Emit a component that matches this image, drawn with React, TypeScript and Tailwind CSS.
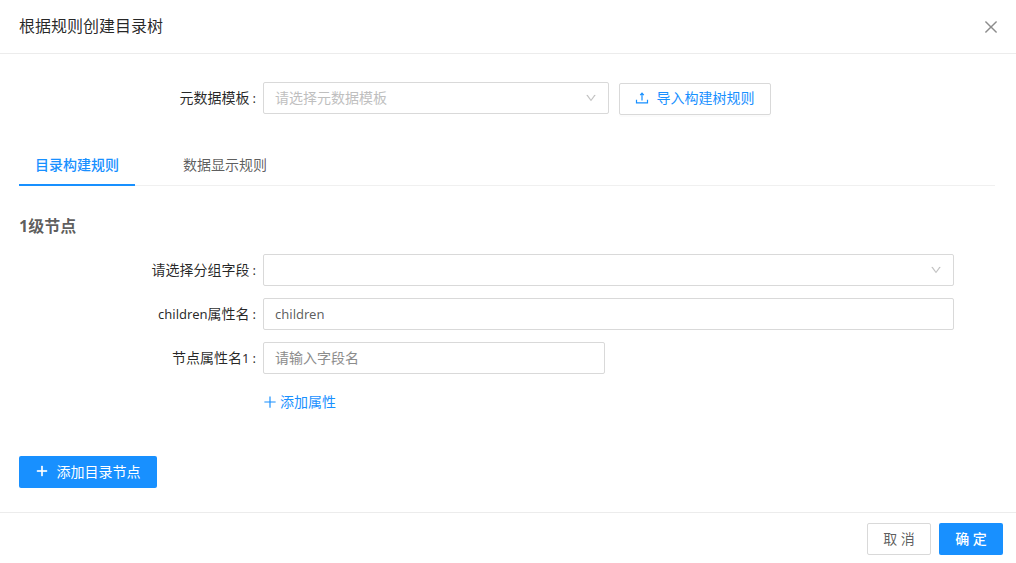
import type { ReactNode } from 'react'
import { AiOutlineClose, AiOutlineDown, AiOutlinePlus } from 'react-icons/ai'

const tabs = ['目录构建规则', '数据显示规则']

function UploadIcon() {
  return (
    <svg width="14" height="14" viewBox="0 0 14 14" fill="none" stroke="currentColor" strokeWidth="1.2">
      <path d="M1.5 8.8v3h11v-3" />
      <path d="M7 9.5V2.5M5.2 4.2L7 2.2l1.8 2" />
    </svg>
  )
}

function Label({ children }: { children: ReactNode }) {
  return (
    <label className="w-[244px] shrink-0 pr-[7px] text-right text-black/85 whitespace-nowrap">
      {children}
      <span className="ml-[3px] text-[13px]">:</span>
    </label>
  )
}

function Header() {
  return (
    <header className="flex h-[54px] shrink-0 items-center justify-between border-b border-[#ececec] pl-[19px] pr-4">
      <h1 className="pb-px text-base text-black/85">根据规则创建目录树</h1>
      <button aria-label="关闭" className="text-black/45">
        <AiOutlineClose size={18} strokeWidth={0} />
      </button>
    </header>
  )
}

function TemplateRow() {
  return (
    <div className="flex h-8 items-center">
      <Label>元数据模板</Label>
      <div className="flex h-8 w-[346px] items-center justify-between rounded-[2px] border border-[#d9d9d9] pl-[11px] pr-[11px] text-[#bfbfbf]">
        <span>请选择元数据模板</span>
        <AiOutlineDown size={12} strokeWidth={15} />
      </div>
      <button className="ml-[10px] mt-[2px] flex h-8 w-[152px] items-center justify-center gap-2 rounded-[2px] border border-[#d9d9d9] pb-[2px] pr-px text-[#1890ff] shadow-[0_2px_0_rgba(0,0,0,0.015)]">
        <UploadIcon />
        导入构建树规则
      </button>
    </div>
  )
}

function Tabs() {
  return (
    <nav className="mt-[30px] flex h-[42px] gap-8 border-b border-[#f0f0f0]">
      {tabs.map((tab, index) => (
        <button
          key={tab}
          className={
            index === 0
              ? '-mb-px h-[42px] border-b-2 border-[#1890ff] px-4 pt-[2px] font-medium text-[#1890ff]'
              : '-mb-px h-[42px] border-b-2 border-transparent px-4 pt-[2px] text-black/65'
          }
        >
          {tab}
        </button>
      ))}
    </nav>
  )
}

function NodeForm() {
  return (
    <section>
      <h2 className="mt-7 text-base leading-6 font-bold text-black/65">1级节点</h2>
      <div className="mt-4 flex flex-col gap-3">
        <div className="flex h-8 items-center">
          <Label>请选择分组字段</Label>
          <div className="flex h-8 w-[691px] items-center justify-end rounded-[2px] border border-[#d9d9d9] pr-[11px] text-[#bfbfbf]">
            <AiOutlineDown size={12} strokeWidth={15} />
          </div>
        </div>
        <div className="flex h-8 items-center">
          <Label>
            <span className="text-[13px]">children</span>属性名
          </Label>
          <input
            className="h-8 w-[691px] rounded-[2px] border border-[#d9d9d9] px-[11px] text-[13px] text-black/65 outline-none"
            defaultValue="children"
          />
        </div>
        <div className="flex h-8 items-center">
          <Label>
            节点属性名<span className="text-[13px]">1</span>
          </Label>
          <input
            className="h-8 w-[342px] rounded-[2px] border border-[#d9d9d9] px-[11px] pb-[2px] outline-none placeholder:text-[#8c8c8c]"
            placeholder="请输入字段名"
          />
        </div>
        <button className="ml-[243px] flex h-8 items-center gap-[2px] self-start text-[#1890ff]">
          <AiOutlinePlus size={16} />
          添加属性
        </button>
      </div>
      <button className="mt-[38px] flex h-8 w-[138px] items-center justify-center gap-2 rounded-[2px] bg-[#1890ff] pr-px text-white">
        <AiOutlinePlus size={14} strokeWidth={50} className="-mt-[2px]" />
        添加目录节点
      </button>
    </section>
  )
}

function Footer() {
  return (
    <footer className="flex h-[51px] shrink-0 gap-2 border-t border-[#ececec] justify-end pr-[13px] pt-[10px]">
      <button className="h-8 w-16 rounded-[2px] border border-[#d9d9d9] text-black/65">取 消</button>
      <button className="h-8 w-16 rounded-[2px] bg-[#1890ff] font-medium text-white">确 定</button>
    </footer>
  )
}

export default function App() {
  return (
    <div className="flex h-[563px] w-[1016px] flex-col bg-white font-['Noto_Sans','Noto_Sans_CJK_SC',sans-serif] text-sm">
      <Header />
      <main className="flex-1 pl-[19px] pr-[21px] pt-7">
        <TemplateRow />
        <Tabs />
        <NodeForm />
      </main>
      <Footer />
    </div>
  )
}
